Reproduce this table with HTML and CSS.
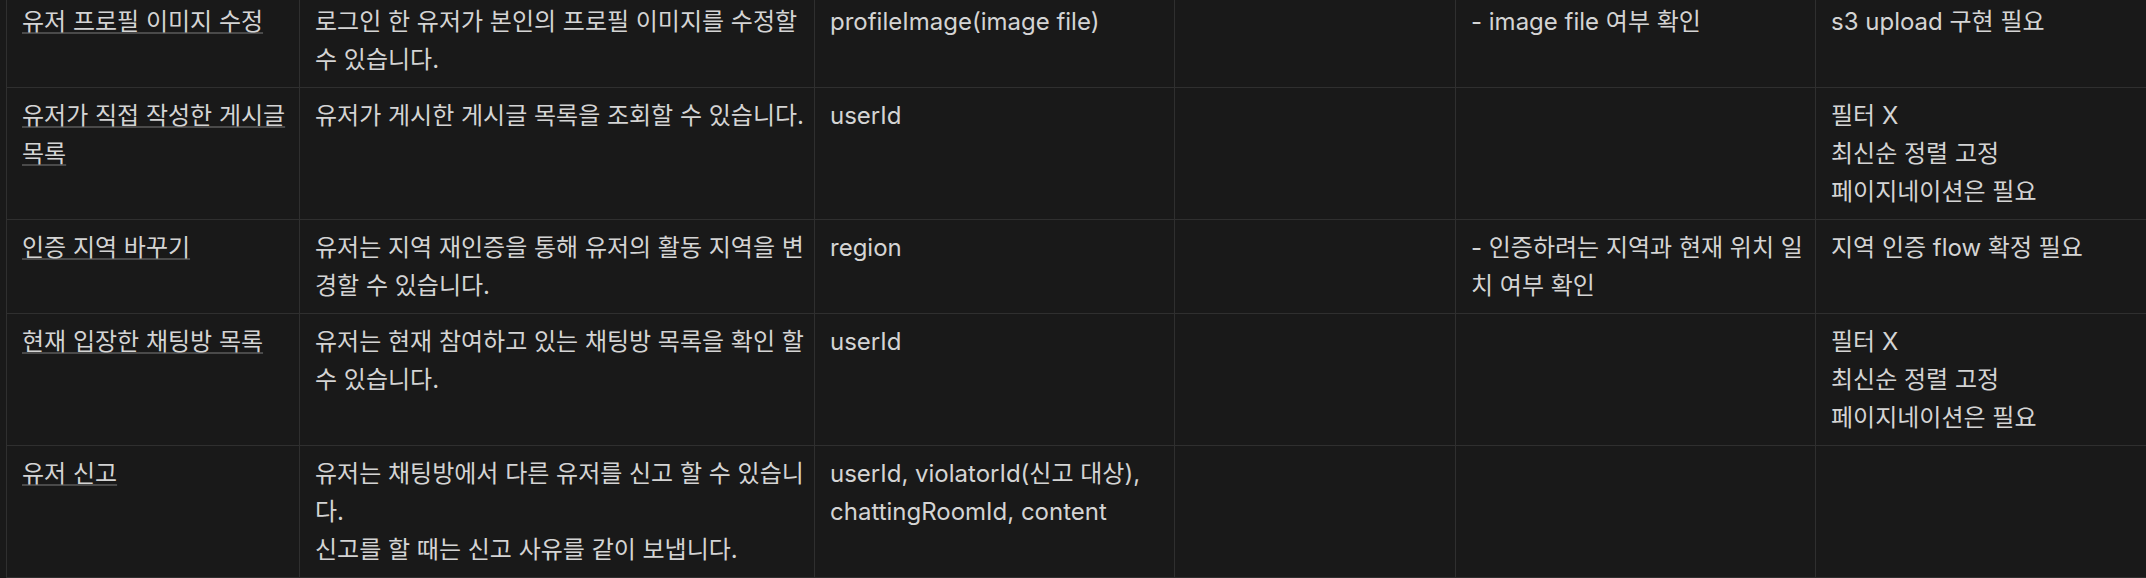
FILE: index.html
```html
<!DOCTYPE html>
<html lang="ko">
<head>
<meta charset="utf-8">
<title>유저 기능 명세</title>
<link rel="stylesheet" href="styles.css">
</head>
<body>
<div class="table-wrap">
  <table class="spec-table">
    <colgroup>
      <col class="col-name">
      <col class="col-desc">
      <col class="col-param">
      <col class="col-empty">
      <col class="col-valid">
      <col class="col-note">
    </colgroup>
    <tbody>
      <tr>
        <td><span class="page-link">유저 프로필 이미지 수정</span></td>
        <td>로그인 한 유저가 본인의 프로필 이미지를 수정할<br>수 있습니다.</td>
        <td>profileImage(image file)</td>
        <td></td>
        <td>- image file 여부 확인</td>
        <td>s3 upload 구현 필요</td>
      </tr>
      <tr>
        <td><span class="page-link">유저가 직접 작성한 게시글 목록</span></td>
        <td>유저가 게시한 게시글 목록을 조회할 수 있습니다.</td>
        <td>userId</td>
        <td></td>
        <td></td>
        <td>필터 X<br>최신순 정렬 고정<br>페이지네이션은 필요</td>
      </tr>
      <tr>
        <td><span class="page-link">인증 지역 바꾸기</span></td>
        <td>유저는 지역 재인증을 통해 유저의 활동 지역을 변<br>경할 수 있습니다.</td>
        <td>region</td>
        <td></td>
        <td>- 인증하려는 지역과 현재 위치 일<br>치 여부 확인</td>
        <td>지역 인증 flow 확정 필요</td>
      </tr>
      <tr>
        <td><span class="page-link">현재 입장한 채팅방 목록</span></td>
        <td>유저는 현재 참여하고 있는 채팅방 목록을 확인 할<br>수 있습니다.</td>
        <td>userId</td>
        <td></td>
        <td></td>
        <td>필터 X<br>최신순 정렬 고정<br>페이지네이션은 필요</td>
      </tr>
      <tr>
        <td><span class="page-link">유저 신고</span></td>
        <td>유저는 채팅방에서 다른 유저를 신고 할 수 있습니<br>다.<br>신고를 할 때는 신고 사유를 같이 보냅니다.</td>
        <td>userId, violatorId(신고 대상),<br>chattingRoomId, content</td>
        <td></td>
        <td></td>
        <td></td>
      </tr>
    </tbody>
  </table>
</div>
</body>
</html>
```
FILE: styles.css
```css
html, body {
  margin: 0;
  padding: 0;
  background: #191919;
  overflow: hidden;
  height: 100%;
}

body {
  font-family: Inter, "Noto Sans CJK KR", sans-serif;
  font-size: 24px;
  line-height: 38px;
  color: #d4d4d4;
}

.table-wrap {
  margin-top: -7px;
  margin-left: 6px;
}

.spec-table {
  border-collapse: collapse;
  table-layout: fixed;
  width: 2180px;
}

.col-name { width: 293px; }
.col-desc { width: 515px; }
.col-param { width: 360px; }
.col-empty { width: 281px; }
.col-valid { width: 360px; }
.col-note { width: 371px; }

.spec-table td {
  border: 1px solid #2f2f2f;
  padding: 9px 6px 8px 15px;
  vertical-align: top;
  overflow-wrap: break-word;
}

.page-link {
  text-decoration: underline;
  text-decoration-color: #4a4a4a;
  text-decoration-thickness: 2px;
  text-underline-offset: 2px;
}
```
